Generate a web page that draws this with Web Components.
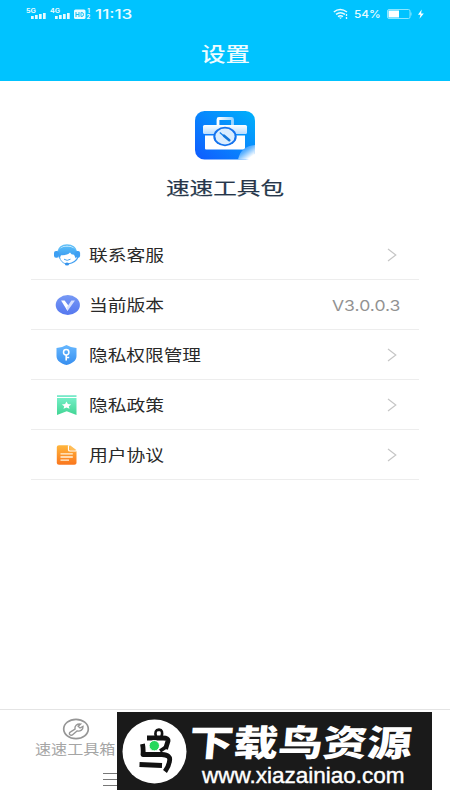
<!DOCTYPE html>
<html lang="zh-CN">
<head>
<meta charset="utf-8">
<title>设置</title>
<style>
html,body{margin:0;height:100%;background:#fff;overflow:hidden}
body{font-family:"Noto Sans CJK SC","Liberation Sans",sans-serif}
</style>
</head>
<body>
<settings-page></settings-page>
<script>
const define=(name,html,Base=HTMLElement)=>customElements.define(name,class extends Base{
  constructor(){super();const t=document.createElement('template');t.innerHTML=html;this.attachShadow({mode:'open'}).append(t.content.cloneNode(true));}
});

// Text stretched horizontally to the width given in its "w" attribute.
customElements.define('wide-text',class extends HTMLElement{
  connectedCallback(){
    if(!this.shadowRoot){
      this.attachShadow({mode:'open'}).innerHTML='<style>:host{display:block;flex:none;white-space:nowrap}span{display:inline-block;transform-origin:0 50%}</style><span><slot></slot></span>';
    }
    const w=+this.getAttribute('w'),s=this.shadowRoot.querySelector('span');
    this.style.width=w+'px';
    s.style.transform='scaleX('+(w/s.offsetWidth)+') skewX('+(this.getAttribute('slant')||0)+'deg)';
  }
});

define('status-bar',`<style>
:host{display:flex;height:28px;align-items:center;padding:0 25px;box-sizing:border-box;color:#e8fbff}
svg{display:block;flex:none}
.clock{font:500 13px/28px Inter,"Liberation Sans",sans-serif;margin-left:4px}
.pct{font:500 10.5px/28px Inter,"Liberation Sans",sans-serif;margin:1px 6px 0 5px}
.gap{flex:1}
</style>
<svg width="66" height="14" viewBox="0 0 66 14" fill="#e8fbff">
 <g font-family="Inter,sans-serif" font-size="6" font-weight="700">
 <text x="1" y="5.8" textLength="10" lengthAdjust="spacingAndGlyphs">5G</text>
 <text x="25" y="5.8" textLength="10" lengthAdjust="spacingAndGlyphs">4G</text></g>
 <path d="M6 9h2.7v3H6zM10 8h2.7v4H10zM14 7h2.7v5H14zM18 6h2.7v6H18zM30 9h2.7v3H30zM34 8h2.7v4H34zM38 7h2.7v5H38zM42 6h2.7v6H42z"/>
 <rect x="49" y="2.5" width="11.5" height="9.5" rx="1.5"/>
 <path d="M51 5v5M54 5v5M51 7.5h3M56 5.5v4h.8q1.7 0 1.7-2t-1.7-2z" fill="none" stroke="#13bff4"/>
 <g font-family="Inter,sans-serif" font-size="6" font-weight="700"><text x="62.3" y="6">1</text><text x="61.5" y="12.3">2</text></g>
</svg>
<wide-text class="clock" w="37">11:13</wide-text>
<span class="gap"></span>
<svg width="16" height="12" viewBox="0 0 16 12" fill="none" stroke="#e8fbff" stroke-width="1.5"><path d="M.8 4Q7 -1 14 4M3 6.4Q7.4 3 12 6.4M5 8.7Q7.4 7 10 8.7"/><path d="M6 9.5h3l-1.5 1.6z" fill="#e8fbff" stroke="none"/><path d="M13.5 6v2M13.5 9v2" stroke-width="1.3"/></svg>
<wide-text class="pct" w="27">54%</wide-text>
<svg width="38" height="12" viewBox="0 0 38 12"><rect x=".5" y="1.5" width="22.5" height="9" rx="1.5" fill="none" stroke="#8ce6ff"/><path d="M1.5 2.5h10.5v7H1.5z" fill="#fff"/><path d="M24 4.5v3" stroke="#8ce6ff"/><path d="M34.7 1.5 31 6.7h2.5l-1 4L36.8 5.4h-2.7z" fill="#fff"/></svg>`);

define('page-header',`<style>
:host{display:block;height:81px;background:#00c3ff;color:#effcff}
.title{display:flex;justify-content:center;height:53px;font-size:20px;line-height:52px;font-weight:500}
</style><status-bar></status-bar><div class="title"><wide-text w="49"><slot></slot></wide-text></div>`);

define('app-brand',`<style>
:host{display:flex;flex-direction:column;align-items:center;padding-top:30px;height:119px;color:#26364a}
svg{display:block}
wide-text{font-size:18px;line-height:26px;margin-top:14px;-webkit-text-stroke:.2px currentColor}
</style>
<svg width="60" height="49" viewBox="0 0 60 49">
<defs><linearGradient id="b" x1="1" y1="0" x2="0" y2="1"><stop stop-color="#00b2fb"/><stop offset="1" stop-color="#105aff"/></linearGradient>
<linearGradient id="w" x2="0" y2="1"><stop stop-color="#fff"/><stop offset="1" stop-color="#b7dcff"/></linearGradient>
<linearGradient id="h" x2="1" y2="0"><stop stop-color="#fff"/><stop offset="1" stop-color="#9fd6ff"/></linearGradient>
<linearGradient id="c" x1=".2" y1=".1" x2=".8" y2=".8"><stop stop-color="#148bff"/><stop offset=".45" stop-color="#66b6ff"/><stop offset="1" stop-color="#fff"/></linearGradient></defs>
<rect width="60" height="48.5" rx="9.5" fill="url(#b)"/>
<path d="M23 14V8.5Q23 7.5 24 7.5H36.5Q37.5 7.5 37.5 8.5V14" fill="none" stroke="url(#h)" stroke-width="2.8"/>
<rect x="8" y="14" width="44" height="9" rx="1.5" fill="url(#w)"/>
<path d="M10 24.5H50V37.5Q50 38.5 49 38.5H11Q10 38.5 10 37.5z" fill="#fff"/>
<ellipse cx="30" cy="25.5" rx="11.7" ry="9.7" fill="#1473ee"/><ellipse cx="30" cy="25.5" rx="9.6" ry="7.9" fill="#d9edff"/>
<path d="M24.8 21.5 28.8 25" stroke="#1680e7" stroke-width="1.3"/><path d="M29 24.7 34.3 29.2" stroke="#1175da" stroke-width="2.6" stroke-linecap="round"/>
<path d="M60 34C51 35 45 39 43 48.5H52Q60 48.5 60 40z" fill="url(#c)"/>
</svg>
<wide-text w="118"><slot></slot></wide-text>`);

define('settings-row',`<style>
:host{display:flex;align-items:center;height:50px;box-sizing:border-box;border-bottom:1px solid #ededed;padding:0 21px 0 23px;color:#292929;font-size:15.5px;line-height:26px}
.icon{display:flex;width:35px;height:30px;align-items:center;flex:none}
.label{padding-bottom:2px}
.end{margin-left:auto;display:flex;align-items:center}
::slotted(svg){display:block}
</style><span class="icon"><slot name="icon"></slot></span><span class="label"><slot></slot></span><span class="end"><slot name="end"><svg width="12" height="14" viewBox="0 0 12 14"><path d="M2 1 9.8 7 2 13" fill="none" stroke="#c6c6c6" stroke-width="1.2"/></svg></slot></span>`);

define('settings-list',`<style>
:host{display:block;margin:0 31px 0 31px}
.version{font:14.5px/26px Inter,"Liberation Sans",sans-serif;color:#929292;margin:2px -3px 0 0}
</style>
<settings-row><svg slot="icon" width="27" height="22" viewBox="0 0 27 22"><defs><linearGradient id="a" x2="0" y2="1"><stop stop-color="#57bcf9"/><stop offset="1" stop-color="#3594ee"/></linearGradient></defs>
<path d="M3.8 8C5 3 8 1 13 1s8.5 2 9.6 7" fill="none" stroke="#61bff7" stroke-width="1.4"/>
<path d="M3.7 10C4 4.5 7.5 2.4 13 2.4S22.5 4.5 22.8 10l-1 4.5-1.8-3.7Q17 10.8 16 8.5 13.5 11.5 7 11.2L5.3 15z" fill="url(#a)"/>
<rect y="7" width="4.8" height="6.7" rx="2" fill="#3d9ff3"/><rect x="21.3" y="7" width="4.8" height="6.7" rx="2" fill="#3d9ff3"/>
<path d="M5.5 13Q7 19 12.5 20" fill="none" stroke="#65b4f5" stroke-width="1"/><path d="M24 13Q22 18.5 14 20" fill="none" stroke="#429ff1" stroke-width="1.2"/><path d="M10 15.2Q13 17.5 16.5 15.2" fill="none" stroke="#4da4ef"/><ellipse cx="13" cy="20" rx="2.1" ry="1.5" fill="#3492eb"/></svg><wide-text w="75">联系客服</wide-text></settings-row>
<settings-row><svg slot="icon" width="27" height="22" viewBox="0 0 27 22"><defs><linearGradient id="v" x2="0" y2="1"><stop stop-color="#7799f5"/><stop offset="1" stop-color="#5577ef"/></linearGradient></defs><ellipse cx="13.8" cy="11" rx="12.1" ry="10" fill="url(#v)"/><path d="M7.1 6.5H10.6L15 12.2 13.5 17z" fill="#fff"/><path d="M17.4 6.5H21L13.5 17 12.7 13.6z" fill="#d6e0ff"/></svg><wide-text w="75">当前版本</wide-text><wide-text slot="end" class="version" w="69">V3.0.0.3</wide-text></settings-row>
<settings-row><svg slot="icon" width="27" height="22" viewBox="0 0 27 22"><defs><linearGradient id="s" x2="0" y2="1"><stop stop-color="#67b8ff"/><stop offset="1" stop-color="#368eef"/></linearGradient></defs><path d="M12.5 1Q17 3.8 22.5 4V12C22.5 17 18 19.5 12.5 21 7 19.5 2.5 17 2.5 12V4Q8 3.8 12.5 1z" fill="url(#s)"/><circle cx="12.2" cy="8.2" r="2.7" fill="none" stroke="#fff" stroke-width="1.5"/><path d="M12.2 11v5.5M12.2 13.5h3" stroke="#fff" stroke-width="1.6"/></svg><wide-text w="112">隐私权限管理</wide-text></settings-row>
<settings-row><svg slot="icon" width="27" height="22" viewBox="0 0 27 22"><defs><linearGradient id="g" x2="0" y2="1"><stop stop-color="#74eec6"/><stop offset="1" stop-color="#42d594"/></linearGradient></defs><path d="M3 1.2H22.5V3H3z" fill="#77e9c8"/><path d="M3 4H22.5V21L12.7 17.2 3 21z" fill="url(#g)"/><path d="m12.5 7.5 1.4 2.5 3.3.4-2.4 1.8.7 2.6-3-1.4-3 1.4.7-2.6-2.4-1.8 3.3-.4z" fill="#fff"/></svg><wide-text w="75">隐私政策</wide-text></settings-row>
<settings-row><svg slot="icon" width="27" height="22" viewBox="0 0 27 22"><defs><linearGradient id="o" x2="0" y2="1"><stop stop-color="#ffb63c"/><stop offset="1" stop-color="#fa761d"/></linearGradient></defs><path d="M5 1.2H15L22.5 7V19Q22.5 20.8 20.3 20.8H5Q2.8 20.8 2.8 19V3Q2.8 1.2 5 1.2z" fill="url(#o)"/><path d="M14.5 1.2v4.5q0 1.3 1.5 1.3h6.5" fill="none" stroke="#fff" stroke-width="1.2"/><path d="M16 1.3 22.3 6H17Q16 6 16 5z" fill="#ffbd58"/><path d="M6.5 9.8h12.3M6.5 13h12.3M6.5 16.2h8.5" stroke="#fff3dd" stroke-width="1.3"/></svg><wide-text w="75">用户协议</wide-text></settings-row>`);

define('tab-bar',`<style>
:host{display:flex;flex-direction:column;margin-top:auto;height:91px;box-sizing:border-box;border-top:1.5px solid #e4e4e4}
.tab{display:flex;flex-direction:column;align-items:center;width:151px;color:#a5a5a5;font-size:13.5px;line-height:16px;padding-top:8px}
svg{display:block}
.menu{margin:16px 0 0 103px}
</style>
<div class="tab"><svg width="28" height="22" viewBox="0 0 28 22" fill="none" stroke="#969696"><ellipse cx="14" cy="11" rx="12.3" ry="9.7" stroke-width="1.7"/><path d="M8 16.8C6.8 15.6 7.4 14.5 8.6 13.8L13 11.1C12.4 8 14.8 5.8 18.6 6.1L16.2 8.3 18 10 21 8.4C21.3 11.5 18.4 13.7 15 13L10.9 16.4C9.9 17.4 8.8 17.5 8 16.8z" stroke-width="1.4"/></svg><wide-text w="81">速速工具箱</wide-text></div>
<svg class="menu" width="24" height="15" viewBox="0 0 24 15"><path d="M0 1.5H24M0 7.5H24M0 13.5H24" stroke="#777" stroke-width="1.1"/></svg>`);

define('site-badge',`<style>
:host{position:absolute;left:117px;top:712px;width:315px;height:78px;display:flex;align-items:center;background:#1a1a1a;color:#fff;overflow:hidden;box-sizing:border-box;padding-left:5px}
svg{display:block;flex:none}
.copy{display:flex;flex-direction:column;margin-left:2px}
.name{font:900 36px/40px "Liberation Sans","Noto Sans CJK SC",sans-serif;margin-top:9px}
.url{font:21.5px/24px "Liberation Sans",sans-serif;margin:0 0 0 13px;-webkit-text-stroke:.4px #fff}
</style>
<svg width="65" height="66" viewBox="0 0 65 66"><circle cx="32.5" cy="33.5" r="32" fill="#fff"/>
<g fill="none" stroke="#111" stroke-width="4.8" stroke-linejoin="round"><path d="M25 20H41Q46.5 20 46 23L43.5 31"/><path d="M20.5 26Q21.5 31 21 36.5H40Q49 37 47.5 43 47 48 43 53.5"/><path d="M17.5 46.5 40 47.5"/><path d="M44 29 38 33" stroke-width="3.5"/><path d="M34 18.5Q32 12 37 11.6 41.5 12 39.5 18.5" stroke-width="2.6"/></g><circle cx="32.3" cy="27.7" r="5.2" fill="#25d85b" stroke="#fff"/></svg>
<div class="copy"><wide-text class="name" w="223" slant="-4">下载鸟资源</wide-text><wide-text class="url" w="203">www.xiazainiao.com</wide-text></div>`);

define('settings-page',`<style>
:host{display:flex;flex-direction:column;position:relative;width:450px;height:800px;background:#fff;overflow:hidden}
</style>
<page-header>设置</page-header><app-brand>速速工具包</app-brand><settings-list></settings-list><tab-bar></tab-bar><site-badge></site-badge>`);
</script>
</body>
</html>
